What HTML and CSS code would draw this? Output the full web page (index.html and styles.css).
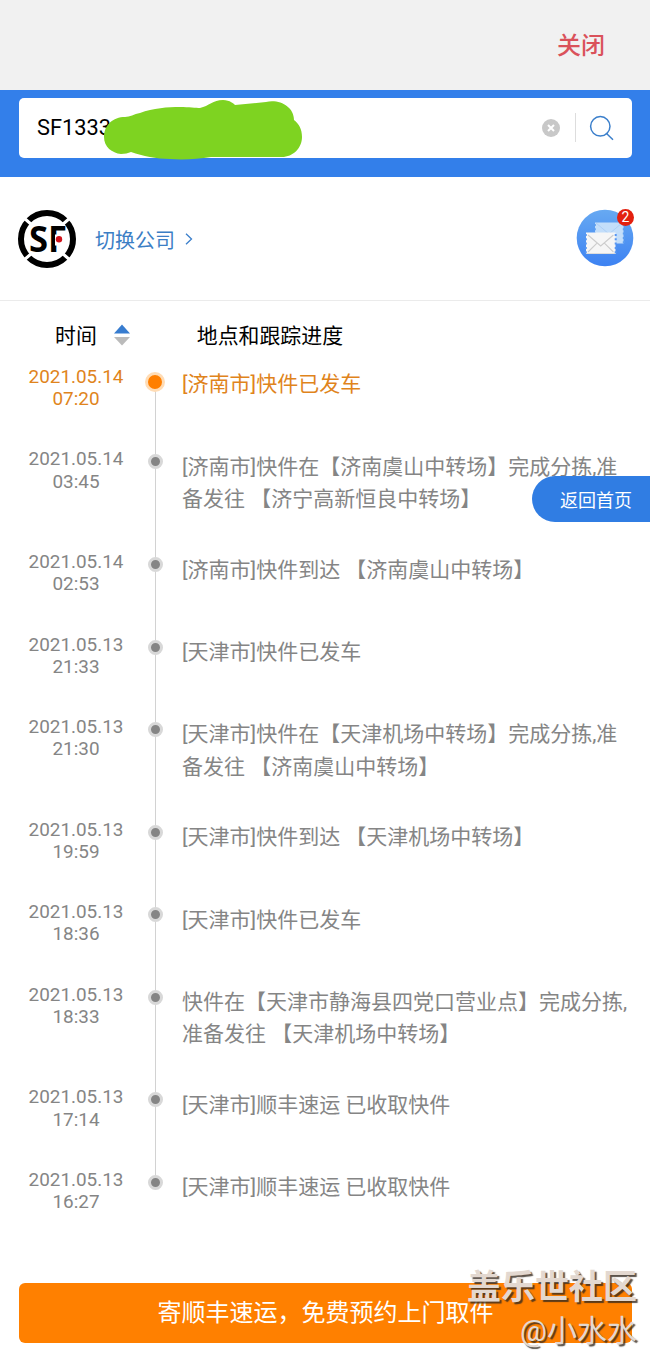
FILE: index.html
```html
<!DOCTYPE html>
<html lang="zh-CN">
<head>
    <meta charset="UTF-8">
    <meta name="viewport" content="width=device-width, initial-scale=1.0">
    <title>快递查询</title>
    <link rel="stylesheet" href="styles.css">
</head>
<body>
    <header>
        <a class="close">关闭</a>
    </header>

    <div class="search-bar">
        <div class="search-box">
            <span class="number">SF1333</span>
            <svg class="clear" width="18" height="18" viewBox="0 0 18 18">
                <circle cx="9" cy="9" r="9" fill="#c8c8c8"/>
                <path d="M6 6l6 6M12 6l-6 6" stroke="#fff" stroke-width="2"/>
            </svg>
            <span class="divider"></span>
            <svg class="search-icon" width="26" height="26" viewBox="0 0 26 26" fill="none" stroke="#3b7fcb" stroke-width="1.5">
                <circle cx="11.3" cy="11.3" r="9.7"/>
                <path d="M17 18l7 6.8"/>
            </svg>
        </div>
        <!-- marker over the rest of the number -->
        <svg class="scribble" width="200" height="62" viewBox="0 0 200 62">
            <path d="M17 55C8 54 0 48 0 38C0 26 9 18 21 18C26 18 30 15 36 14C49 9 64 8 76 8C85 8 92 9 96 9C105 7 109 1 119 1C126 1 130 5 131 6L162 3C176 0 190 8 190 21C195 25 198 30 198 38C198 49 189 58 178 58L107 58C94 60 80 61 66 60C52 60 39 57 27 53C24 54 21 55 17 55Z" fill="#7ed321"/>
        </svg>
    </div>

    <div class="company">
        <svg class="logo" width="60" height="60" viewBox="0 0 60 60">
            <circle cx="30" cy="30" r="26" fill="none" stroke="#000" stroke-width="6"/>
            <path d="M7 9l8 7M53 9l-8 7M7 51l8-7M53 51l-8-7" stroke="#fff" stroke-width="3"/>
            <text class="logo-text" x="12" y="43" textLength="38" lengthAdjust="spacingAndGlyphs">SF</text>
            <rect x="38" y="25.5" width="12" height="11" fill="#fff"/>
            <circle cx="42" cy="30.3" r="3.2" fill="#d0121b"/>
        </svg>
        <a class="switch">切换公司</a>
        <svg class="arrow" width="8" height="12" viewBox="0 0 8 12">
            <path d="M1 .8l5.5 5.2L1 11.2" fill="none" stroke="#3b7fcb" stroke-width="1.3"/>
        </svg>
        <div class="mail">
            <svg width="58" height="58" viewBox="0 0 58 58">
                <defs>
                    <linearGradient id="sky" x1="0" y1="0" x2="0" y2="1">
                        <stop offset="0" stop-color="#67a9f2"/>
                        <stop offset="1" stop-color="#3d82f2"/>
                    </linearGradient>
                </defs>
                <circle cx="29" cy="29" r="28.3" fill="url(#sky)"/>
                <rect x="19" y="13.5" width="28.5" height="21" fill="#c3defa"/>
                <path d="M47.8 15v19M18.8 15v19" stroke="#5b9df1" stroke-width="2" stroke-dasharray="2 2.3"/>
                <path d="M20 14l13 11 13-11" fill="none" stroke="#aecff5"/>
                <rect x="10" y="23.5" width="29.5" height="21.5" fill="#f6f6f6"/>
                <path d="M10 44.5h29.5" stroke="#ddd"/>
                <path d="M39.7 25v20M9.8 25v20" stroke="#5796f2" stroke-width="2" stroke-dasharray="2 2.3"/>
                <path d="M12 26l12.7 11 12.7-11M12 43l9-8.8M37.4 43l-9-8.8" fill="none" stroke="#ccc" stroke-width="1.1"/>
            </svg>
            <span class="badge">2</span>
        </div>
    </div>

    <div class="table-head">
        <span class="head-time">时间</span>
        <svg width="16" height="22" viewBox="0 0 16 22">
            <path d="M8 .5L16 9.5H0z" fill="#377ccf"/>
            <path d="M8 21.5L16 13H0z" fill="#bbb"/>
        </svg>
        <span class="head-place">地点和跟踪进度</span>
    </div>

    <ul class="timeline">
        <li class="current">
            <div class="time">2021.05.14<br>07:20</div>
            <div class="dot"></div>
            <div class="text">[济南市]快件已发车</div>
        </li>
        <li>
            <div class="time">2021.05.14<br>03:45</div>
            <div class="dot"></div>
            <div class="text">[济南市]快件在【济南虞山中转场】完成分拣,准<br>备发往 【济宁高新恒良中转场】</div>
        </li>
        <li>
            <div class="time">2021.05.14<br>02:53</div>
            <div class="dot"></div>
            <div class="text">[济南市]快件到达 【济南虞山中转场】</div>
        </li>
        <li>
            <div class="time">2021.05.13<br>21:33</div>
            <div class="dot"></div>
            <div class="text">[天津市]快件已发车</div>
        </li>
        <li>
            <div class="time">2021.05.13<br>21:30</div>
            <div class="dot"></div>
            <div class="text">[天津市]快件在【天津机场中转场】完成分拣,准<br>备发往 【济南虞山中转场】</div>
        </li>
        <li>
            <div class="time">2021.05.13<br>19:59</div>
            <div class="dot"></div>
            <div class="text">[天津市]快件到达 【天津机场中转场】</div>
        </li>
        <li>
            <div class="time">2021.05.13<br>18:36</div>
            <div class="dot"></div>
            <div class="text">[天津市]快件已发车</div>
        </li>
        <li>
            <div class="time">2021.05.13<br>18:33</div>
            <div class="dot"></div>
            <div class="text">快件在【天津市静海县四党口营业点】完成分拣,<br>准备发往 【天津机场中转场】</div>
        </li>
        <li>
            <div class="time">2021.05.13<br>17:14</div>
            <div class="dot"></div>
            <div class="text">[天津市]顺丰速运 已收取快件</div>
        </li>
        <li>
            <div class="time">2021.05.13<br>16:27</div>
            <div class="dot"></div>
            <div class="text">[天津市]顺丰速运 已收取快件</div>
        </li>
    </ul>

    <a class="home-button">返回首页</a>

    <div class="footer">
        <a class="order-button">寄顺丰速运，免费预约上门取件</a>
        <div class="watermark">
            <div class="forum">盖乐世社区</div>
            <div class="user">@小水水</div>
        </div>
    </div>
</body>
</html>
```

FILE: styles.css
```css
*, *::before, *::after {
    box-sizing: border-box;
}
body {
    font-family: Roboto, 'Noto Sans CJK SC', sans-serif;
    margin: 0;
    background-color: #fff;
    color: #000;
    position: relative;
    height: 1367px;
    overflow: hidden;
}
header {
    height: 90px;
    background-color: #f1f1f1;
    display: flex;
    justify-content: flex-end;
    align-items: center;
    padding: 0 45px 4px 0;
}
.close {
    color: #da525b;
    font-size: 24px;
    font-weight: 500;
}

/* Search */
.search-bar {
    position: relative;
    height: 87px;
    padding: 8px 18px 0 19px;
    background-color: #337fea;
}
.search-box {
    height: 60px;
    background-color: #fff;
    border-radius: 5px;
    display: flex;
    align-items: center;
    padding: 0 17px 1px 18px;
}
.number {
    flex-grow: 1;
    font-size: 21.8px;
}
.divider {
    width: 1px;
    height: 29px;
    margin: 0 13px 0 15px;
    background-color: #ddd;
}
.scribble {
    position: absolute;
    left: 104px;
    top: 9px;
}

/* Company row */
.company {
    height: 124px;
    border-bottom: 1px solid #ebebeb;
    display: flex;
    align-items: center;
    padding: 0 16px 0 17px;
}
.logo-text {
    font-family: 'Open Sans', sans-serif;
    font-size: 36px;
    font-weight: bold;
}
.switch {
    margin: 2px 10px 0 18px;
    color: #3b7ec5;
    font-size: 20px;
}
.mail {
    position: relative;
    height: 58px;
    margin: -2px 0 0 auto;
}
.badge {
    position: absolute;
    top: 0;
    right: 0;
    width: 17px;
    height: 17px;
    border-radius: 50%;
    background-color: #e3200f;
    color: #fff;
    font-size: 14px;
    line-height: 17px;
    text-align: center;
}

/* Timeline */
.table-head {
    height: 65px;
    display: flex;
    align-items: center;
    padding: 2px 0 0 55px;
    font-size: 20.9px;
}
.table-head span {
    margin-top: -2px;
}
.table-head svg {
    margin: 0 67px 0 17px;
}
.timeline {
    list-style: none;
    margin: 0;
    padding: 0;
    color: #858585;
}
.timeline li {
    display: flex;
    min-height: 82.4px;
}
.time {
    width: 152px;
    font-size: 18.9px;
    line-height: 22.2px;
    text-align: center;
}
.dot {
    position: relative;
    width: 30px;
    margin-left: -12px;
}
/* line between the dots */
.dot::before {
    content: "";
    position: absolute;
    left: 15px;
    top: 14px;
    bottom: -14px;
    width: 1px;
    background-color: #d2d2d2;
}
.timeline li:last-child .dot::before {
    display: none;
}
.dot::after {
    content: "";
    position: absolute;
    left: 8px;
    top: 6px;
    width: 15px;
    height: 15px;
    border: 3px solid #d8d8d8;
    border-radius: 50%;
    background-color: #858585;
}
.text {
    margin-left: 12px;
    padding: 2.4px 0 35.6px;
    font-size: 21px;
    line-height: 32.4px;
    white-space: nowrap;
}
.current {
    color: #e0841c;
}
.current .dot::after {
    left: 5px;
    top: 6px;
    width: 20px;
    height: 20px;
    border-color: #ffdcb5;
    background-color: #ff7f00;
}

/* Floating button */
.home-button {
    position: absolute;
    top: 476px;
    right: 0;
    width: 118px;
    height: 46px;
    padding-left: 28px;
    border-radius: 23px 0 0 23px;
    background-color: #307de3;
    color: #fff;
    font-size: 18px;
    line-height: 49px;
}

.footer {
    position: absolute;
    left: 19px;
    right: 18px;
    bottom: 24px;
}
.order-button {
    display: block;
    height: 60px;
    border-radius: 6px;
    background-color: #ff8000;
    color: #fff;
    font-size: 24px;
    line-height: 61px;
    text-align: center;
}
.watermark {
    position: absolute;
    right: -5px;
    top: -18px;
    color: #e3d8d0;
    text-align: right;
    text-shadow: 2px 2px 1px rgba(50, 40, 30, 0.8);
    white-space: nowrap;
}
.forum {
    font-size: 34px;
    font-weight: bold;
    line-height: 44px;
}
.user {
    font-size: 30px;
    line-height: 44px;
}
```
